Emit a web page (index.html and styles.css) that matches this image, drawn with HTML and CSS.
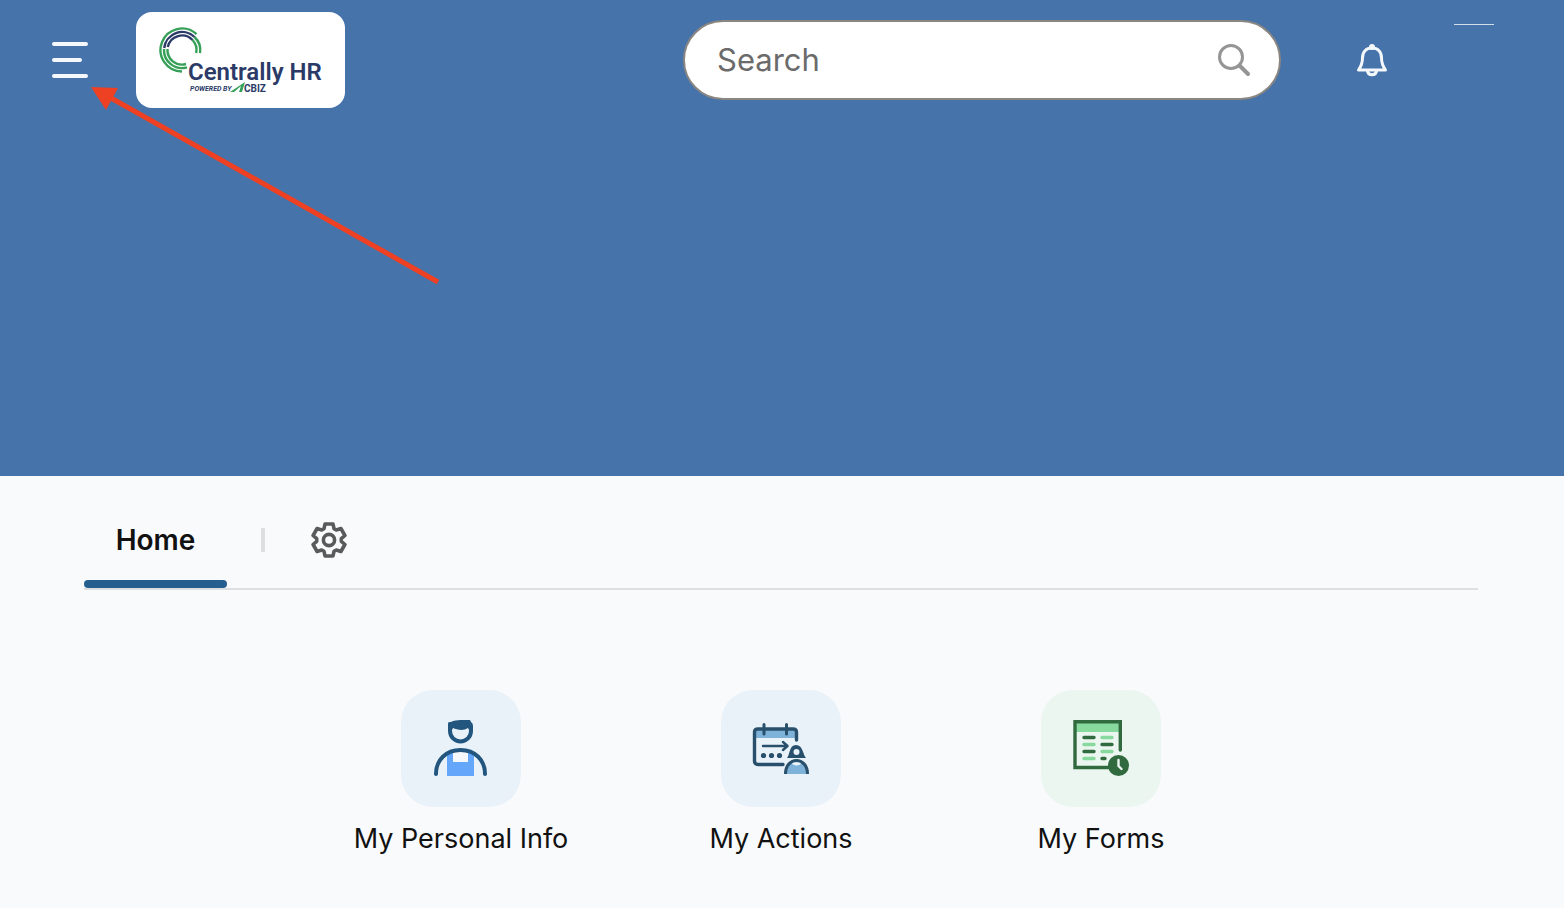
FILE: index.html
```html
<!DOCTYPE html>
<html lang="en">
<head>
    <meta charset="UTF-8">
    <meta name="viewport" content="width=device-width, initial-scale=1.0">
    <title>Centrally HR</title>
    <link rel="stylesheet" href="styles.css">
</head>
<body>
    <div class="hero">
        <header class="header">
            <button class="menu-button" type="button" aria-label="Menu">
                <span class="menu-line"></span>
                <span class="menu-line short"></span>
                <span class="menu-line"></span>
            </button>
            <a class="logo" href="#" aria-label="Centrally HR">
                <svg width="170" height="68" viewBox="0 0 170 68">
                    <g fill="none" stroke-width="2.400">
                        <path stroke="#36a058" d="M37.500 8.100A21.500 21.500 0 1 0 23 45.500"/>
                        <path stroke="#36a058" d="M5 23A18 18 0 0 0 28 41.300M35.500 11A18 18 0 0 1 41 27"/>
                        <path stroke="#36a058" d="M8.500 23A14.500 14.500 0 0 0 27 38M33.500 14A14.500 14.500 0 0 1 37.200 27"/>
                        <path stroke="#2b3a67" d="M5.200 22A18 18 0 0 1 35.500 11M8.800 21A14.500 14.500 0 0 1 33.500 14"/>
                    </g>
                    <text class="logo-name" x="29" y="54">Centrally HR</text>
                    <text class="logo-powered" x="31" y="65">POWERED BY</text>
                    <path fill="#36a058" d="M71 66L86 56L83 66H80L82 60L75 66Z"/>
                    <text class="logo-cbiz" x="85" y="66">CBIZ</text>
                </svg>
            </a>
            <form class="search" role="search">
                <input type="text" class="search-input" placeholder="Search" aria-label="Search">
                <button class="search-button" type="button" aria-label="Search">
                    <svg width="34" height="34" viewBox="0 0 34 34" fill="none" stroke="#959595">
                        <circle cx="14" cy="14" r="11.500" stroke-width="3"/>
                        <path d="M22.500 22.500L31 31" stroke-width="4" stroke-linecap="round"/>
                    </svg>
                </button>
            </form>
            <button class="bell-button" type="button" aria-label="Notifications">
                <svg width="32" height="34" viewBox="0 0 32 34" fill="none" stroke="#f5f8fb" stroke-width="3" stroke-linecap="round" stroke-linejoin="round">
                    <path d="M16 5C10 5 6.500 9 6.500 15C6.500 21 5 23.500 2.500 27H29.500C27 23.500 25.500 21 25.500 15C25.500 9 22 5 16 5Z"/>
                    <circle cx="16" cy="4" r="2" fill="#f5f8fb" stroke-width="2"/>
                    <path d="M11.500 28C12 33 20 33 20.500 28"/>
                </svg>
            </button>
            <span class="profile"></span>
        </header>
        <svg class="arrow" width="350" height="200" viewBox="0 0 350 200">
            <path d="M20 11L347 195" stroke="#ee4023" stroke-width="5"/>
            <path d="M0 0L27 1L15 23Z" fill="#ee4023"/>
        </svg>
    </div>

    <main class="content">
        <nav class="tabs">
            <button class="tab" type="button">Home</button>
            <span class="tab-divider"></span>
            <button class="settings-button" type="button" aria-label="Settings">
                <svg width="36" height="36" viewBox="-18 -18 36 36" fill="none" stroke="#5a5a5a" stroke-width="3.600" stroke-linejoin="round">
                    <path d="M-4-16H4L5-11.300L7.300-10L11.900-11.500L15.900-4.500L12.300-1.300V1.300L15.900 4.500L11.900 11.500L7.300 10L5 11.300L4 16H-4L-5 11.300L-7.300 10L-11.900 11.500L-15.900 4.500L-12.300 1.300V-1.300L-15.900-4.500L-11.900-11.500L-7.300-10L-5-11.300Z"/>
                    <circle r="5.600"/>
                </svg>
            </button>
        </nav>

        <div class="tiles">
            <a class="tile" href="#">
                <span class="tile-icon">
                    <svg width="60" height="60" viewBox="0 0 60 60">
                        <path fill="#64a7fa" d="M16 36L22 32V42H37V32L43 36V58H16Z"/>
                        <path fill="#f5f8fb" d="M22 32H37V44H22Z"/>
                        <path fill="none" stroke="#22567f" stroke-width="4" stroke-linecap="round" d="M5 56C5 42 15 32 29.500 32S54 42 54 56"/>
                        <path fill="none" stroke="#22567f" stroke-width="4" d="M19 9V13A10.500 10.500 0 0 0 40 13V9"/>
                        <path fill="#22567f" d="M17 12V6C17 4 18 4 20 4C24 2 28 2 39 2L40 4Q42 5 42 8V12H38L37 10C33 13 26 12 22 10L21 12Z"/>
                    </svg>
                </span>
                <span class="tile-label">My Personal Info</span>
            </a>
            <a class="tile" href="#">
                <span class="tile-icon">
                    <svg width="60" height="60" viewBox="0 0 60 60">
                        <path fill="#7fb2d9" d="M4 11H45V20H4Z"/>
                        <g fill="none" stroke="#28506c" stroke-width="3.400" stroke-linecap="round" stroke-linejoin="round">
                            <path d="M32 46.500H7Q3.500 46.500 3.500 43V14Q3.500 11 7 11H42Q45.500 11 45.500 14V22"/>
                            <path stroke-width="3" d="M13 6.500V16M35.500 6.500V16"/>
                            <path stroke-width="2.400" d="M12 28H36M32 24L36.500 28L32 32"/>
                        </g>
                        <g fill="#28506c">
                            <circle cx="12.500" cy="37.500" r="2.600"/>
                            <circle cx="20.500" cy="37.500" r="2.600"/>
                            <circle cx="28.500" cy="37.500" r="2.600"/>
                            <path d="M36 40C39 37 38 27 45 27S52 37 55 40Z"/>
                        </g>
                        <circle cx="45.500" cy="34" r="3" fill="#eaf2f9"/>
                        <path fill="#7fb2d9" d="M35 56C35 38 57 38 57 56Z"/>
                        <path fill="#eaf2f9" d="M40 45L45.500 42L51 45Q45.500 50 40 45Z"/>
                        <path fill="none" stroke="#28506c" stroke-width="3" d="M34.500 56C34.500 38 56.500 38 56.500 56"/>
                    </svg>
                </span>
                <span class="tile-label">My Actions</span>
            </a>
            <a class="tile" href="#">
                <span class="tile-icon green">
                    <svg width="60" height="60" viewBox="0 0 60 60">
                        <path fill="#88d99e" d="M4 4H49V14H4Z"/>
                        <path fill="none" stroke="#316a3f" stroke-width="3.400" stroke-linecap="round" d="M37 49.500H4V3.700H49.300V32"/>
                        <g fill="none" stroke-width="3.400" stroke-linecap="round">
                            <path stroke="#316a3f" d="M13 19.500H23M31 26.500H41M13 33.500H23M31 40.500H34"/>
                            <path stroke="#88d99e" d="M31 19.500H41M13 26.500H23M31 33.500H41M13 40.500H23"/>
                        </g>
                        <circle cx="47.500" cy="47.500" r="10.500" fill="#316a3f"/>
                        <path fill="none" stroke="#edf6f1" stroke-width="2.400" stroke-linecap="round" stroke-linejoin="round" d="M47.500 42V48L50.500 51"/>
                    </svg>
                </span>
                <span class="tile-label">My Forms</span>
            </a>
        </div>
    </main>
</body>
</html>
```
FILE: styles.css
```css
* {
    box-sizing: border-box;
}

body {
    margin: 0;
    min-height: 100vh;
    background: #f9fafc;
    color: #111;
    font-family: Inter, 'Liberation Sans', sans-serif;
}

button {
    padding: 0;
    border: none;
    background: none;
    font: inherit;
    cursor: pointer;
}

svg {
    display: block;
}

/* Header */
.hero {
    position: relative;
    min-height: 476px;
    background: #4673aa;
}

.header {
    display: flex;
    align-items: center;
    height: 120px;
    padding: 0 70px 0 52px;
}

.menu-button {
    display: flex;
    flex-direction: column;
    gap: 12px;
    width: 36px;
    margin-right: 48px;
}

.menu-line {
    width: 36px;
    height: 4px;
    border-radius: 2px;
    background: #f5f8fb;
}

.menu-line.short {
    width: 30px;
}

.logo {
    display: flex;
    align-items: center;
    height: 96px;
    padding: 0 16px 0 23px;
    border-radius: 16px;
    background: #fff;
}

.logo-name,
.logo-powered,
.logo-cbiz {
    font-family: Roboto, 'Liberation Sans', sans-serif;
    font-weight: bold;
    fill: #2b3a67;
}

.logo-name {
    font-size: 24px;
    font-weight: 600;
}

.logo-powered {
    font-size: 7px;
    font-style: italic;
}

.logo-cbiz {
    font-size: 10px;
}

.search {
    display: flex;
    align-items: center;
    flex: 0 1 598px;
    height: 80px;
    margin: 0 75px 0 auto;
    padding: 0 28px 0 32px;
    border: 2px solid #8a8681;
    border-radius: 40px;
    background: #fff;
}

.search-input {
    flex: 1;
    min-width: 0;
    padding: 0 0 2px;
    border: none;
    outline: none;
    background: none;
    font: inherit;
    font-size: 31px;
}

.search-input::placeholder {
    color: #6b6b6b;
    opacity: 1;
}

.profile {
    align-self: flex-start;
    width: 40px;
    height: 1px;
    margin: 24px 0 0 66px;
    background: #d3dfe8;
}

.arrow {
    position: absolute;
    top: 87px;
    left: 91px;
    pointer-events: none;
}

/* Tabs */
.content {
    padding: 24px 86px 48px 84px;
}

.tabs {
    display: flex;
    align-items: center;
    height: 90px;
    border-bottom: 2px solid #dedfe0;
}

.tab {
    position: relative;
    align-self: stretch;
    min-width: 143px;
    padding: 0 24px 8px;
    font-size: 28px;
    font-weight: 600;
    color: #111;
}

.tab::after {
    content: '';
    position: absolute;
    right: 0;
    bottom: 0;
    left: 0;
    height: 8px;
    border-radius: 4px;
    background: #255f8f;
}

.tab-divider {
    width: 4px;
    height: 24px;
    margin: 0 46px 8px 34px;
    background: #dedfe0;
}

.settings-button {
    margin-bottom: 8px;
}

/* Tiles */
.tiles {
    display: grid;
    grid-template-columns: repeat(3, minmax(0, 320px));
    justify-content: center;
    margin-top: 100px;
}

.tile {
    display: flex;
    flex-direction: column;
    align-items: center;
    gap: 14px;
    color: #111;
    text-decoration: none;
}

.tile-icon {
    display: flex;
    align-items: center;
    justify-content: center;
    width: 120px;
    height: 117px;
    padding-bottom: 1px;
    border-radius: 32px;
    background: #eaf2f9;
}

.tile-icon.green {
    background: #ebf6f1;
}

.tile-label {
    font-size: 27px;
    line-height: 36px;
    text-align: center;
}
```
